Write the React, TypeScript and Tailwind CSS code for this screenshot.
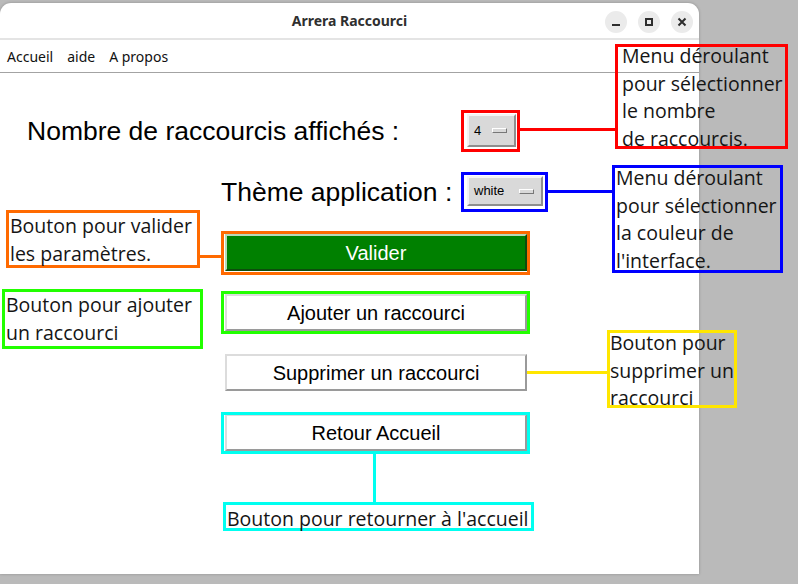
import type { ReactNode } from 'react';

const appFont = { fontFamily: '"Liberation Sans", Arial, sans-serif' };
const noteFont = { fontFamily: '"Open Sans", "Noto Sans", sans-serif' };
const uiFont = { fontFamily: '"Noto Sans", "Open Sans", sans-serif' };

function OptionMenu({ value, width }: { value: string; width: string }) {
  return (
    <div
      className={`${width} h-full flex items-center justify-between bg-[#d9d9d9] border-2 border-t-[#f4f4f4] border-l-[#f4f4f4] border-b-[#8e8e8e] border-r-[#8e8e8e] pl-[5px] pr-[7px] text-[13px] text-black`}
      style={appFont}
    >
      <span>{value}</span>
      <span className="w-[15px] h-[5px] bg-[#d9d9d9] border border-t-white border-l-white border-b-[#777] border-r-[#777]" />
    </div>
  );
}

function TkButton({ label, primary }: { label: string; primary?: boolean }) {
  return (
    <button
      className={
        primary
          ? 'w-[302px] h-[37px] bg-[#008000] text-white text-[20px] border-2 border-t-[#b8d8b8] border-l-[#b8d8b8] border-b-[#0d4d0d] border-r-[#0d4d0d]'
          : 'w-[302px] h-[37px] bg-white text-black text-[20px] border-2 border-t-[#dcdcdc] border-l-[#dcdcdc] border-b-[#9a9a9a] border-r-[#9a9a9a]'
      }
      style={appFont}
    >
      {label}
    </button>
  );
}

function Note({ className, children }: { className: string; children: ReactNode }) {
  return (
    <div className={`absolute border-[3px] text-[19.5px] leading-[27.5px] text-[#151515] whitespace-nowrap ${className}`} style={noteFont}>
      {children}
    </div>
  );
}

export default function App() {
  return (
    <div className="relative w-[798px] h-[584px] bg-[#bababa] overflow-hidden">
      {/* window */}
      <div className="mt-[3px] w-[699px] h-[571px] bg-white rounded-t-[11px] shadow-[0_0_3px_rgba(0,0,0,0.25)] flex flex-col">
        <div className="relative h-[37px] flex items-center justify-center border-b-2 border-[#e4e4e4]">
          <span className="text-[14px] font-bold text-[#2f2f2f]" style={uiFont}>
            Arrera Raccourci
          </span>
          <div className="absolute right-[6px] top-[8px] flex gap-[11px]">
            <span className="w-[22px] h-[22px] rounded-full bg-[#ebebeb] flex items-center justify-center">
              <span className="mt-[6px] w-[8px] h-[2px] bg-[#2e2e2e]" />
            </span>
            <span className="w-[22px] h-[22px] rounded-full bg-[#ebebeb] flex items-center justify-center">
              <span className="w-[8px] h-[8px] border-2 border-[#2e2e2e]" />
            </span>
            <span className="w-[22px] h-[22px] rounded-full bg-[#ebebeb] flex items-center justify-center">
              <svg width="10" height="10" viewBox="0 0 10 10">
                <path d="M1.5 1.5 L8.5 8.5 M8.5 1.5 L1.5 8.5" stroke="#2e2e2e" strokeWidth="2" />
              </svg>
            </span>
          </div>
        </div>
        <div className="h-[33px] flex items-center gap-[14px] pl-[7px] border-b border-[#a3a3a3] text-[14px] text-[#111]" style={uiFont}>
          <span>Accueil</span>
          <span>aide</span>
          <span>A propos</span>
        </div>

        <div className="flex flex-col">
          <div className="mt-[41px] h-[33px] flex items-center">
            <span className="ml-[27px] w-[440px] pt-[2px] text-[26.5px] text-black" style={appFont}>
              Nombre de raccourcis affichés :
            </span>
            <OptionMenu value="4" width="w-[49px]" />
          </div>
          <div className="mt-[29px] h-[30px] flex items-center">
            <span className="ml-[221px] w-[246px] pt-[3px] text-[26.5px] text-black" style={appFont}>
              Thème application :
            </span>
            <OptionMenu value="white" width="w-[76px]" />
          </div>
          <div className="ml-[225px] mt-[28px] flex flex-col gap-[23px]">
            <TkButton label="Valider" primary />
            <TkButton label="Ajouter un raccourci" />
            <TkButton label="Supprimer un raccourci" />
            <TkButton label="Retour Accueil" />
          </div>
        </div>
      </div>

      {/* annotations */}
      <div className="absolute left-[461px] top-[110px] w-[59px] h-[42px] border-[3px] border-[#ff0000]" />
      <div className="absolute left-[520px] top-[128px] w-[96px] h-[3px] bg-[#ff0000]" />
      <Note className="left-[615px] top-[44px] w-[173px] h-[105px] border-[#ff0000] pl-[4px]">
        <div className="-mt-[5px]">
          Menu déroulant<br />pour sélectionner<br />le nombre<br />de raccourcis.
        </div>
      </Note>

      <div className="absolute left-[461px] top-[172px] w-[87px] h-[40px] border-[3px] border-[#0000ff]" />
      <div className="absolute left-[548px] top-[190px] w-[65px] h-[3px] bg-[#0000ff]" />
      <Note className="left-[612px] top-[165px] w-[171px] h-[108px] border-[#0000ff] pl-[1px]">
        <div className="-mt-[4px]">
          Menu déroulant<br />pour sélectionner<br />la couleur de<br />l'interface.
        </div>
      </Note>

      <div className="absolute left-[221px] top-[231px] w-[309px] h-[44px] border-[3px] border-[#ff6a00]" />
      <div className="absolute left-[200px] top-[255px] w-[21px] h-[3px] bg-[#ff6a00]" />
      <Note className="left-[6px] top-[210px] w-[194px] h-[58px] border-[#ff6a00] pl-[1px]">
        <div className="-mt-[1px]">
          Bouton pour valider<br />les paramètres.
        </div>
      </Note>

      <div className="absolute left-[221px] top-[291px] w-[309px] h-[43px] border-[3px] border-[#22ff00]" />
      <Note className="left-[2px] top-[289px] w-[201px] h-[60px] border-[#22ff00] pl-[1px]">
        <div className="-mt-[1px]">
          Bouton pour ajouter<br />un raccourci
        </div>
      </Note>

      <div className="absolute left-[527px] top-[371px] w-[80px] h-[3px] bg-[#ffe600]" />
      <Note className="left-[607px] top-[330px] w-[130px] h-[78px] border-[#ffe600] pl-0">
        <div className="-mt-[4px]">
          Bouton pour<br />supprimer un<br />raccourci
        </div>
      </Note>

      <div className="absolute left-[221px] top-[412px] w-[309px] h-[42px] border-[3px] border-[#00fff0]" />
      <div className="absolute left-[373px] top-[454px] w-[3px] h-[48px] bg-[#00fff0]" />
      <Note className="left-[223px] top-[502px] w-[311px] h-[29px] border-[#00fff0] pl-[1px] leading-[20px]">
        Bouton pour retourner à l'accueil
      </Note>
    </div>
  );
}
